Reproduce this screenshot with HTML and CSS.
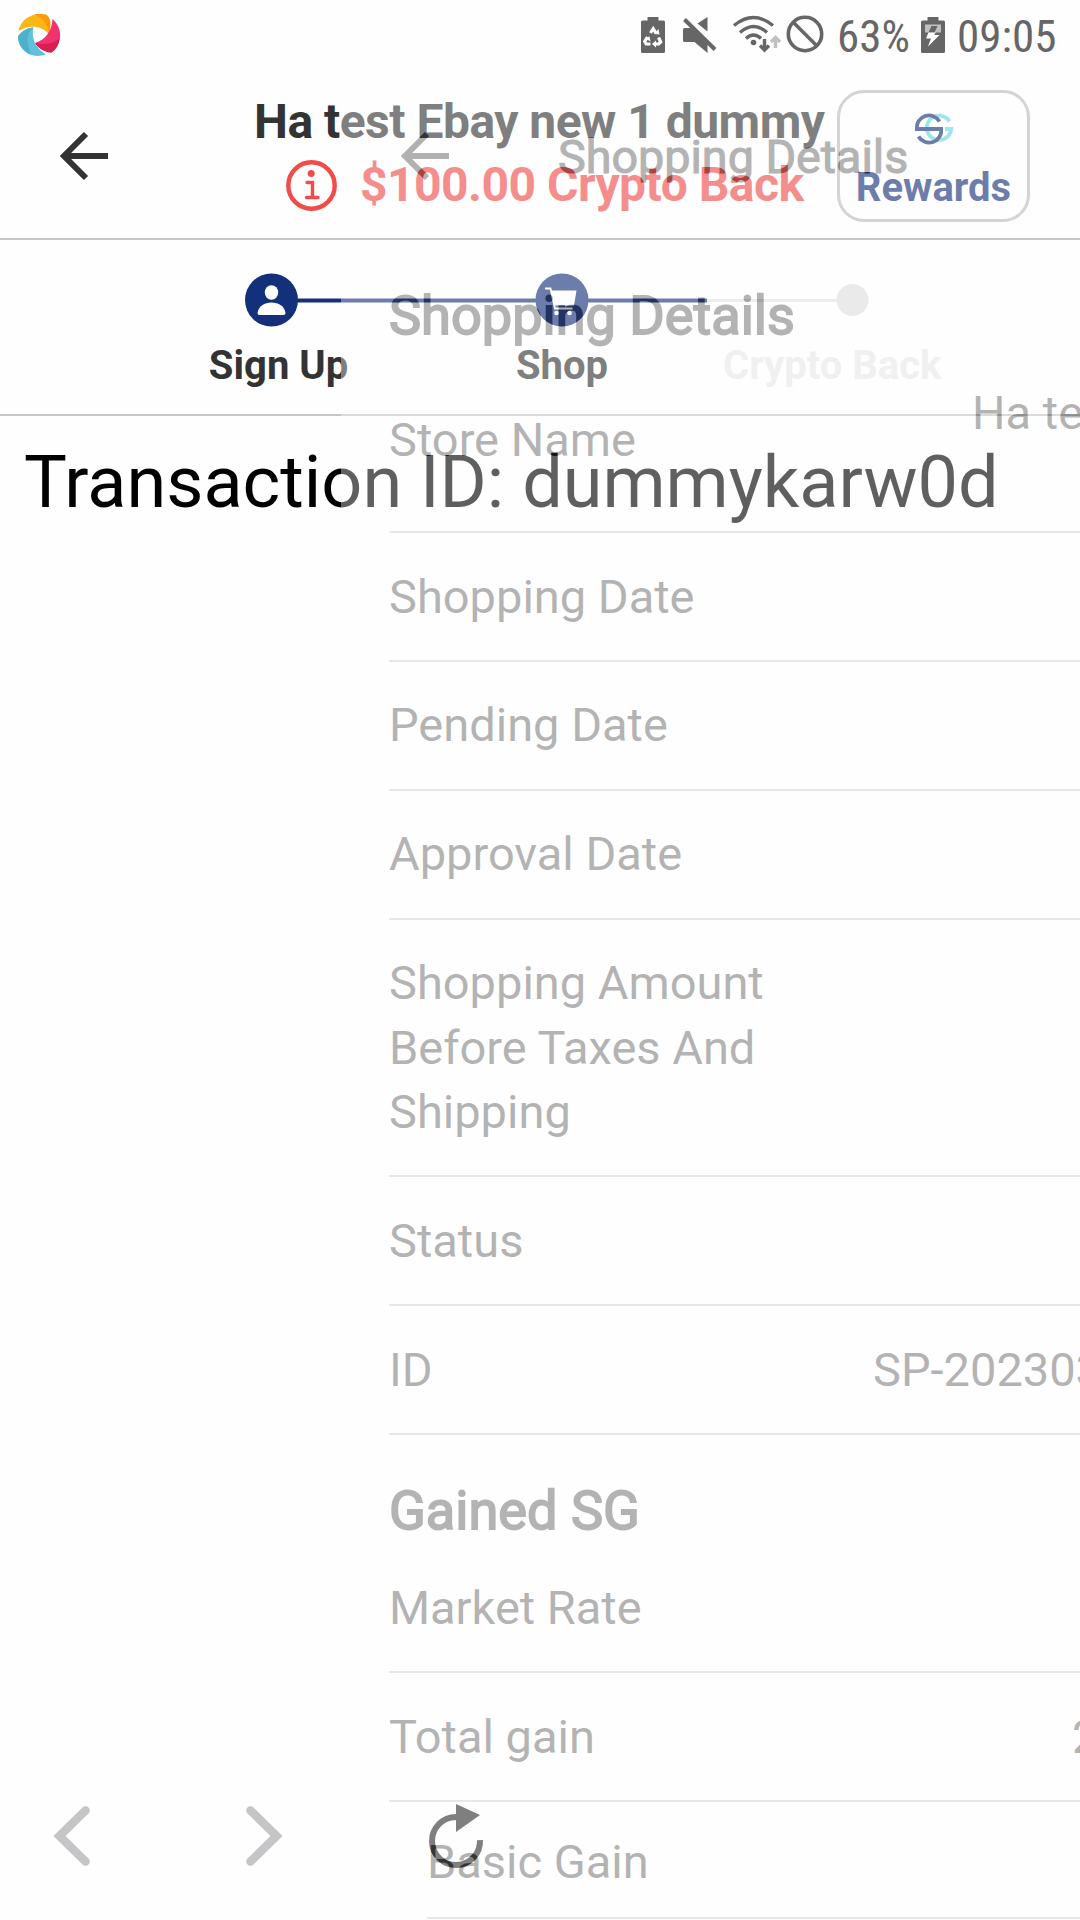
FILE: index.html
```html
<!DOCTYPE html>
<html lang="en">
<head>
<meta charset="utf-8">
<title>Shopping Details</title>
<link rel="stylesheet" href="styles.css">
</head>
<body>
<div class="screen">
  <div class="status">
    <svg class="logo" viewBox="18 14 42 42">
      <path d="M18.500 31C21 19 32 12 46 14.500C51 17 51.500 25 48.800 34C42 26 30 24 18.500 31Z" fill="#fdb714"/>
      <path d="M34 14.300C38 13.700 43 13.800 46.500 15C51 19 51.500 25 48.800 34C48 25 43 18 34 14.300Z" fill="#fd9a0a"/>
      <path d="M52.500 19C59 25 62 33 59 42C57 48 54 51 51.500 52.500C44 52 38 48 35 43C46 40 52 30 52.500 19Z" fill="#f0326e"/>
      <path d="M59 42C57 48 54 51 51.500 52.500C44 52 38 48 35 43C44 45 54 44 59.500 38Z" fill="#d81f50"/>
      <path d="M33.500 27.500C31 37 35 48 46 54.500C36 58 26 55 21 47C18 42 17.500 37 18.500 35.500C23 30 28 28 33.500 27.500Z" fill="#62c1da"/>
      <path d="M33.500 27.500C28 31 26 38 29 48C29.500 50 30 52 31 54C24 52 18 45 18.200 36C23 30 28 28 33.500 27.500Z" fill="#4cb1ca"/>
    </svg>
    <svg class="ic-battery" viewBox="641 17 24 36">
      <path d="M647.500 17h11v3.500h5q1.500 0 1.500 1.500v29.500q0 1.500-1.500 1.500h-21q-1.500 0-1.500-1.500V22q0-1.500 1.500-1.500h5z"/>
      <path d="M650.500 33l2.700-4.300 3 4.800M658.500 37.500l2.200 4.500-2 2h-4M650.500 44h-4.300l-1.500-2.500 2.800-4.500" class="cut"/>
      <path d="M654 34l5.500.500-1-5.500zM656 40.500v7l-4-3.500zM644.500 38l5-1.500 1 5z" fill="#fff"/>
    </svg>
    <svg class="ic-mute" viewBox="683 17 33 36">
      <path d="M684.500 28h6l17 15v10l-13-11h-10q-1.500 0-1.500-1.500v-11q0-1.500 1.500-1.500zM707.500 17v14.500l-10-8z"/>
      <path d="M684.500 19.500l30.500 30" stroke="#666" stroke-width="4"/>
    </svg>
    <svg class="ic-wifi" viewBox="733 14 48 40">
      <g fill="none" stroke="#666" stroke-width="3.400">
        <path d="M734 25.500q19.500-16 39 0M740 32.500q13.500-12 27 0M746 38.500q7.500-7 15 0M764.500 39v10M760 45.500l4.500 4.500 4.500-4.500"/>
        <path d="M775.500 48V38M771 42l4.500-4.500 4.500 4.500" stroke="#c0c0c0"/>
      </g>
      <circle cx="753.500" cy="42.500" r="2.800"/>
    </svg>
    <svg class="ic-block" viewBox="786 15 38 38">
      <circle cx="805" cy="34" r="16.700" fill="none" stroke="#666" stroke-width="3.600"/>
      <path d="M793 22l24 24" stroke="#666" stroke-width="3.600"/>
    </svg>
    <span class="pct">63%</span>
    <svg class="ic-charge" viewBox="921 17 24 36">
      <path d="M927.500 17h11v3.500h5q1.500 0 1.500 1.500v29.500q0 1.500-1.500 1.500h-21q-1.500 0-1.500-1.500V22q0-1.500 1.500-1.500h5z"/>
      <path d="M925 24.500h16v8h-16z" fill="#c0c0c0"/>
      <path d="M931.500 26h6l-3 6.500h-6z"/>
      <path d="M928.500 32.500l-2.500 6h5l-3 8 11.500-11.500h-5.500l2-2.500z" fill="#fff"/>
    </svg>
    <span class="time">09:05</span>
  </div>

  <div class="header">
    <svg class="arrow" viewBox="0 0 48 48"><path d="M48 24H6M26 2L4 24l22 22" fill="none" stroke="#333" stroke-width="6"/></svg>
    <div class="titles">
      <div class="title">Ha test Ebay new 1 dummy</div>
      <div class="back">
        <svg class="info" viewBox="0 0 51 51">
          <circle cx="25.500" cy="25.500" r="23.200" fill="none" stroke="#ef4c4a" stroke-width="4.400"/>
          <circle cx="25.200" cy="13.500" r="3.500" fill="#ef4c4a"/>
          <path d="M21 22.500h5.500V37M20.500 37.500h11.500" fill="none" stroke="#ef4c4a" stroke-width="3.400" stroke-linecap="round"/>
        </svg>
        <span>$100.00 Crypto Back</span>
      </div>
    </div>
    <div class="rewards">
      <svg class="sg" viewBox="914 115 38 28">
        <g fill="none" stroke-width="3.800">
          <path d="M948.500 121.500A12.200 12.200 0 1 0 950.200 129H944" stroke="#64d7e4"/>
          <path d="M938.500 121.500A12.200 12.200 0 0 0 915.800 129H940.200A12.200 12.200 0 0 1 917.500 136.500" stroke="#15307b"/>
        </g>
      </svg>
      <span>Rewards</span>
    </div>
  </div>

  <div class="stepper">
    <svg class="track" viewBox="0 0 1080 54">
      <path d="M707 27.500H840" stroke="#e4e4e4" stroke-width="3"/>
      <path d="M271 27.500H707" stroke="#15307b" stroke-width="4"/>
      <circle cx="271.500" cy="27" r="26.500" fill="#15307b"/>
      <ellipse cx="271.500" cy="19.500" rx="6.700" ry="7.300" fill="#fff"/>
      <path d="M257.500 40c1-7 7-10.500 14-10.500s13 3.500 14 10.500q0 2-2 2h-24q-2 0-2-2z" fill="#fff"/>
      <circle cx="562" cy="27" r="26.500" fill="#15307b"/>
      <path d="M551 17.500h25.500l-2.500 15h-20z" fill="#fff"/>
      <path d="M545 15.500h5.500l4.500 20h17.500" fill="none" stroke="#fff" stroke-width="1.800"/>
      <circle cx="556.500" cy="40" r="2.300" fill="#fff"/><circle cx="569.500" cy="40" r="2.300" fill="#fff"/>
      <circle cx="852.500" cy="27" r="16" fill="#dfdfdf"/>
    </svg>
    <div class="labels"><span>Sign Up</span><span>Shop</span><span class="off">Crypto Back</span></div>
  </div>

  <div class="content">Transaction ID: dummykarw0d</div>

  <div class="nav">
    <svg class="chev" viewBox="0 0 36 60"><path d="M31.500 4.500L5.500 30l26 25.500" fill="none" stroke="#c5c5c7" stroke-width="8.500" stroke-linecap="round"/></svg>
    <svg class="chev" viewBox="0 0 36 60"><path d="M4.500 4.500L30.500 30l-26 25.500" fill="none" stroke="#c5c5c7" stroke-width="8.500" stroke-linecap="round"/></svg>
    <svg class="reload" viewBox="0 0 54 64"><path d="M27 13A24 24 0 1 0 51 36" fill="none" stroke="#333" stroke-width="6"/><path d="M27 0l24 11-24 17z" fill="#333"/></svg>
  </div>

  <div class="sheet">
    <div class="header">
      <svg class="arrow" viewBox="0 0 48 48"><path d="M48 24H6M26 2L4 24l22 22" fill="none" stroke="#333" stroke-width="6"/></svg>
      <div class="sheet-title">Shopping Details</div>
    </div>
    <div class="list">
      <h2>Shopping Details</h2>
      <div class="row store"><span class="label">Store Name</span><span class="value">Ha test<br>&nbsp;</span></div>
      <div class="row"><span class="label">Shopping Date</span></div>
      <div class="row"><span class="label">Pending Date</span></div>
      <div class="row"><span class="label">Approval Date</span></div>
      <div class="row"><span class="label">Shopping Amount Before Taxes And Shipping</span></div>
      <div class="row"><span class="label">Status</span></div>
      <div class="row id"><span class="label">ID</span><span class="value">SP-202303</span></div>
      <h2>Gained SG</h2>
      <div class="row"><span class="label">Market Rate</span></div>
      <div class="row gain"><span class="label">Total gain</span><span class="value">2</span></div>
      <div class="row sub"><span class="label">Basic Gain</span></div>
    </div>
  </div>
</div>
</body>
</html>
```

FILE: styles.css
```css
* { box-sizing: border-box; }
body { margin: 0; background: #fefefe; font-family: Roboto, "Noto Sans", sans-serif; color: #333; }
svg { display: block; flex: none; overflow: visible; }
.screen { position: relative; width: 1080px; height: 1920px; overflow: hidden; display: flex; flex-direction: column; background: #fefefe; }

.status { height: 72px; flex: none; display: flex; align-items: flex-start; color: #666; }
.status svg { fill: #666; }
.status span { font-family: "Roboto Condensed", Roboto, sans-serif; font-size: 45px; line-height: 74px; }
.logo { width: 42px; height: 42px; margin: 14px 0 0 18px; }
.ic-battery { width: 24px; height: 36px; margin: 17px 0 0 581px; }
.ic-battery .cut { fill: none; stroke: #fff; stroke-width: 3.2; }
.ic-mute { width: 33px; height: 36px; margin: 17px 0 0 18px; }
.ic-wifi { width: 48px; height: 40px; margin: 14px 0 0 17px; }
.ic-block { width: 38px; height: 38px; margin: 15px 0 0 5px; }
.pct { width: 84px; margin-left: 13px; }
.ic-charge { width: 24px; height: 36px; margin: 17px 0 0; }
.time { margin-left: 12px; }

.header { height: 168px; flex: none; display: flex; align-items: center; padding-right: 50px; border-bottom: 2px solid #c6c6c6; }
.arrow { width: 48px; height: 48px; margin-left: 60px; margin-top: 2px; }
.titles { margin-left: 146px; width: 575px; margin-bottom: 5px; font-size: 48px; font-weight: 700; line-height: 63px; letter-spacing: -0.51px; white-space: nowrap; }
.back { display: flex; align-items: center; gap: 22px; padding-left: 32px; color: #ef4c4a; }
.back span { margin-left: 1px; }
.info { width: 51px; height: 51px; margin-top: 3px; }
.rewards { width: 193px; height: 132px; margin-left: auto; margin-top: 1px; display: flex; flex-direction: column; align-items: center; border: 3px solid #bbb; border-radius: 27px; color: #15307b; font-size: 40px; font-weight: 700; line-height: 47px; }
.sg { width: 38px; height: 28px; margin: 22px 0 21px; }

.stepper { height: 176px; flex: none; padding-top: 33px; border-bottom: 2px solid #c6c6c6; }
.track { width: 1080px; height: 54px; }
.labels { display: grid; grid-template-columns: 283px 271px; column-gap: 0; padding-left: 137px; margin-top: 15px; font-size: 40px; font-weight: 700; line-height: 48px; text-align: center; grid-auto-flow: column; justify-content: start; }
.labels .off { color: #e9e9e9; margin-left: 32px; }
.labels span:nth-child(2) { margin-left: 13px; }

.content { flex: 1; padding: 25px 24px 0; font-size: 72px; line-height: 84px; color: #000; white-space: nowrap; }
.nav { height: 168px; flex: none; display: flex; align-items: flex-start; padding: 52px 0 0 54px; }
.chev { width: 36px; height: 60px; margin: 2px 156px 0 0; }
.reload { width: 54px; height: 64px; margin-left: -9px; }

/* Details page sliding in over the shop page, mid-transition */
.sheet { position: absolute; left: 341px; top: 72px; width: 1080px; height: 1848px; background: #fefefe; color: #383838; opacity: .373; }
.sheet-title { margin-left: 109px; font-size: 46.7px; -webkit-text-stroke: 1.1px #383838; line-height: 60px; margin-top: 4px; }
.list { padding-left: 48px; }
h2 { margin: 0; height: 109px; padding-top: 42px; font-size: 54.1px; font-weight: 400; line-height: 67px; -webkit-text-stroke: 1.8px #383838; }
.row { display: flex; align-items: center; padding: 31.6px 0 30.9px; border-bottom: 2px solid #c3c3c3; font-size: 47px; line-height: 64.4px; }
.label { width: 420px; flex: none; }
.value { white-space: nowrap; line-height: 54px; }
.store { height: 184px; }
.store .value { margin-left: 163px; }
.id .value { margin-left: 64px; }
.gain .value { margin-left: 263px; }
.sub { margin-left: 38px; padding: 28px 0 23px; }
```
